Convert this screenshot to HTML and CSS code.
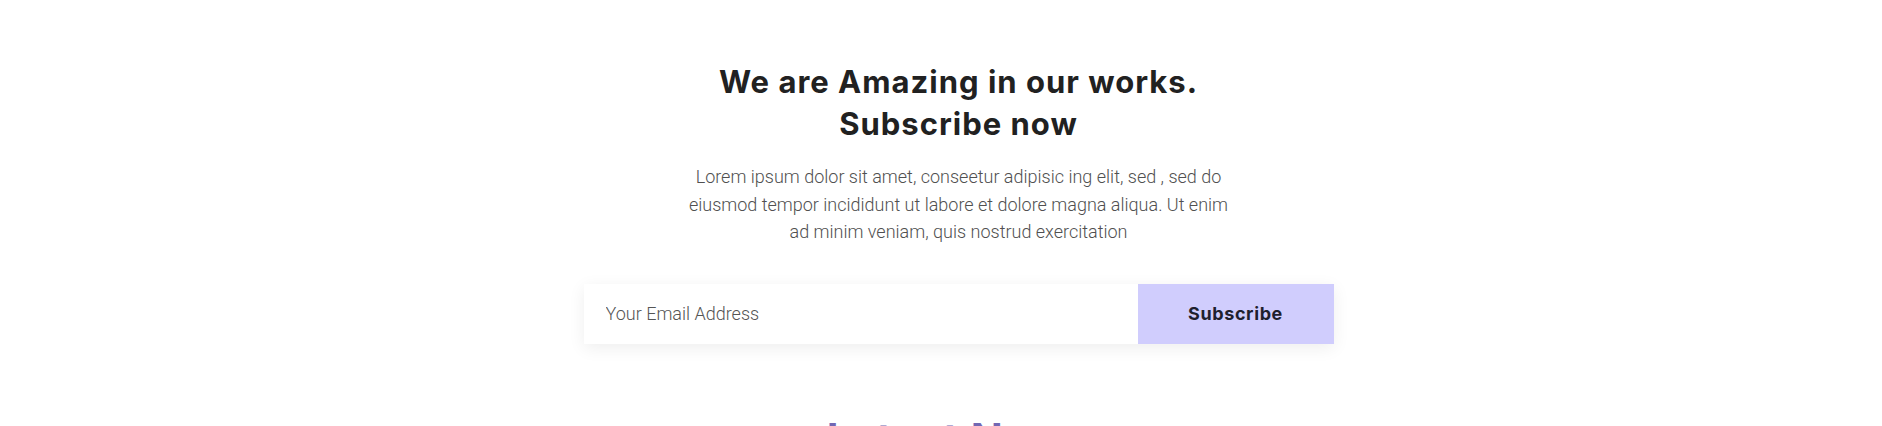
FILE: index.html
```html
<!DOCTYPE html>
<html lang="en">
<head>
<meta charset="utf-8">
<title>Subscribe</title>
<link rel="stylesheet" href="styles.css">
</head>
<body>
<section class="subscribe">
  <div class="subscribe-inner">
    <h2 class="subscribe-title">We are Amazing in our works.<br>Subscribe now</h2>
    <p class="subscribe-text">Lorem ipsum dolor sit amet, conseetur adipisic ing elit, sed , sed do eiusmod tempor incididunt ut labore et dolore magna aliqua. Ut enim ad minim veniam, quis nostrud exercitation</p>
    <form class="subscribe-form">
      <input class="subscribe-input" type="email" placeholder="Your Email Address">
      <button class="subscribe-btn" type="button">Subscribe</button>
    </form>
  </div>
</section>
<section class="news">
  <h2 class="news-title">Latest News</h2>
</section>
</body>
</html>
```

FILE: styles.css
```css
* { box-sizing: border-box; }
html, body { margin: 0; padding: 0; background: #fff; }
body { font-family: "Roboto", "Liberation Sans", sans-serif; overflow: hidden; }

.subscribe {
  display: flex;
  justify-content: center;
  padding: 61px 0 0 35px;
}
.subscribe-inner {
  width: 750px;
  display: flex;
  flex-direction: column;
  align-items: center;
}
.subscribe-title {
  margin: 0;
  font-family: "Inter", "DejaVu Sans", sans-serif;
  font-weight: 700;
  font-size: 31px;
  line-height: 42px;
  letter-spacing: 1px;
  color: #212121;
  text-align: center;
}
.subscribe-text {
  margin: 18px 0 0;
  width: 550px;
  font-weight: 300;
  font-size: 18px;
  line-height: 27.5px;
  color: #505050;
  text-align: center;
}
.subscribe-form {
  margin-top: 38px;
  width: 750px;
  height: 60px;
  display: flex;
  box-shadow: 0 4px 16px rgba(0, 0, 0, 0.07);
}
.subscribe-input {
  flex: 1;
  border: 0;
  outline: none;
  padding: 0 22px;
  font-family: "Roboto", sans-serif;
  font-weight: 300;
  font-size: 18px;
  color: #555;
  background: #fff;
}
.subscribe-input::placeholder { color: #555; }
.subscribe-btn {
  width: 196px;
  border: 0;
  background: #d0cdfd;
  font-family: "Inter", "DejaVu Sans", sans-serif;
  font-weight: 700;
  font-size: 18px;
  letter-spacing: 0.6px;
  color: #1f1f2e;
}
.news {
  display: flex;
  justify-content: center;
  padding: 71px 0 0 35px;
}
.news-title {
  margin: 0;
  font-family: "Inter", "DejaVu Sans", sans-serif;
  font-weight: 700;
  font-size: 42px;
  line-height: 48px;
  letter-spacing: 1px;
  color: #7267b3;
}
```
